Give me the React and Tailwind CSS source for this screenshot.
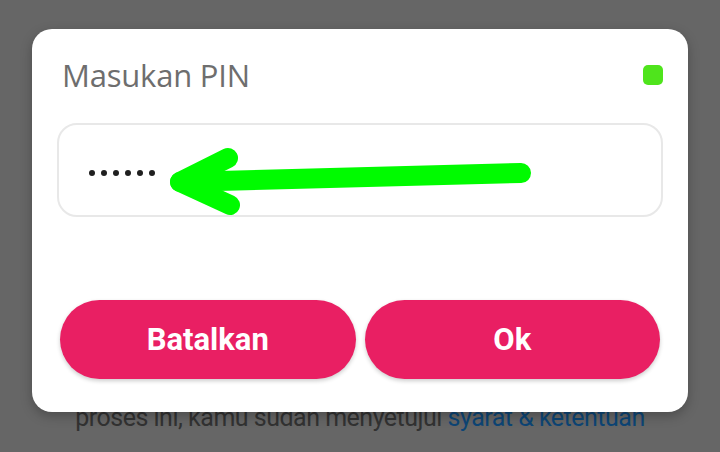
export default function App() {
  return (
    <div className="relative w-[720px] h-[452px] overflow-hidden bg-[#666666] flex flex-col justify-end items-center pb-[22px]">
      {/* Page text behind the modal */}
      <p className="text-[25px] leading-none text-[#323232] font-['Roboto',sans-serif] tracking-[-0.5px]">
        proses ini, kamu sudah menyetujui <span className="text-[#0d4575]">syarat &amp; ketentuan</span>
      </p>

      {/* PIN dialog */}
      <div className="absolute left-[32px] top-[29px] w-[656px] h-[383px] bg-white rounded-[20px] shadow-[0_4px_12px_rgba(0,0,0,0.25)] flex flex-col px-[25px] pt-[30px]">
        <div className="flex items-center justify-between pl-[5px] h-[32px]">
          <h2 className="text-[31px] leading-none font-medium text-[#6e6e6e] font-['Open_Sans',sans-serif] tracking-[-0.2px]">Masukan PIN</h2>
          <div className="w-[20px] h-[20px] rounded-[5px] bg-[#4fe41c]" />
        </div>

        <div className="relative mt-[32px] h-[94px] border-2 border-[#e8e8e8] rounded-[20px] flex items-center pl-[30px]">
          <div className="flex gap-[6px] mt-[6px]">
            <span className="w-[6px] h-[6px] rounded-full bg-[#1f1f1f]" />
            <span className="w-[6px] h-[6px] rounded-full bg-[#1f1f1f]" />
            <span className="w-[6px] h-[6px] rounded-full bg-[#1f1f1f]" />
            <span className="w-[6px] h-[6px] rounded-full bg-[#1f1f1f]" />
            <span className="w-[6px] h-[6px] rounded-full bg-[#1f1f1f]" />
            <span className="w-[6px] h-[6px] rounded-full bg-[#1f1f1f]" />
          </div>
          {/* Annotation arrow */}
          <svg className="absolute left-[110px] top-[22px]" width="380" height="70" viewBox="0 0 380 70" fill="none">
            <path d="M11 35 L352 26" stroke="#00fb00" strokeWidth="20" strokeLinecap="round" />
            <path d="M59 11 L11 35 L61 58" stroke="#00fb00" strokeWidth="20" strokeLinecap="round" strokeLinejoin="round" />
          </svg>
        </div>

        <div className="mt-[83px] flex gap-[9px] px-[3px]">
          <button className="flex-1 h-[79px] rounded-full bg-[#e91f63] text-white text-[31px] font-bold font-['Roboto',sans-serif] pt-[2px] shadow-[0_2px_4px_rgba(0,0,0,0.2)]">
            Batalkan
          </button>
          <button className="flex-1 h-[79px] rounded-full bg-[#e91f63] text-white text-[31px] font-bold font-['Roboto',sans-serif] pt-[2px] shadow-[0_2px_4px_rgba(0,0,0,0.2)]">
            Ok
          </button>
        </div>
      </div>
    </div>
  );
}
